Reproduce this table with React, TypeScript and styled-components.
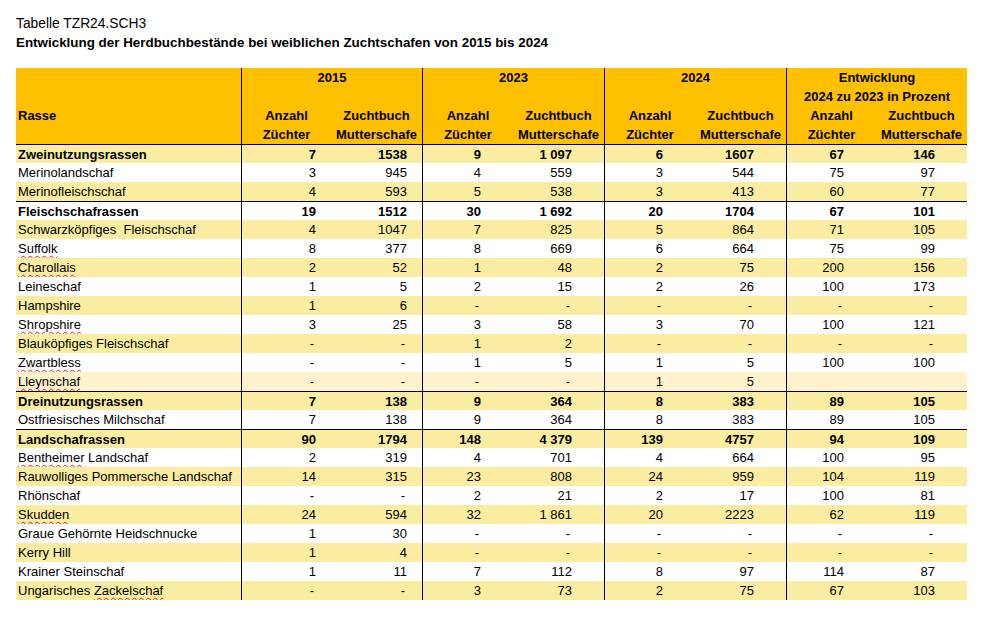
import styled, { createGlobalStyle, css } from "styled-components"

const GlobalStyle = createGlobalStyle`
  body {
    margin: 0;
    background: #ffffff;
    color: #000000;
    font-family: "Liberation Sans", Arial, sans-serif;
    font-size: 13px;
  }
`

const COLUMNS = "225px 90px 91px 91px 91px 91px 91px 90px 91px"

type Tone = "stripe" | "plain" | "cream"

interface IBreedRow {
  name: string
  misspelled?: string
  group?: boolean
  tone: Tone
  values: string[]
}

const rows: IBreedRow[] = [
  { name: "Zweinutzungsrassen", group: true, tone: "stripe", values: ["7", "1538", "9", "1 097", "6", "1607", "67", "146"] },
  { name: "Merinolandschaf", tone: "plain", values: ["3", "945", "4", "559", "3", "544", "75", "97"] },
  { name: "Merinofleischschaf", tone: "stripe", values: ["4", "593", "5", "538", "3", "413", "60", "77"] },
  { name: "Fleischschafrassen", group: true, tone: "plain", values: ["19", "1512", "30", "1 692", "20", "1704", "67", "101"] },
  { name: "Schwarzköpfiges  Fleischschaf", tone: "stripe", values: ["4", "1047", "7", "825", "5", "864", "71", "105"] },
  { name: "", misspelled: "Suffolk", tone: "plain", values: ["8", "377", "8", "669", "6", "664", "75", "99"] },
  { name: "", misspelled: "Charollais", tone: "stripe", values: ["2", "52", "1", "48", "2", "75", "200", "156"] },
  { name: "Leineschaf", tone: "plain", values: ["1", "5", "2", "15", "2", "26", "100", "173"] },
  { name: "Hampshire", tone: "stripe", values: ["1", "6", "-", "-", "-", "-", "-", "-"] },
  { name: "", misspelled: "Shropshire", tone: "plain", values: ["3", "25", "3", "58", "3", "70", "100", "121"] },
  { name: "Blauköpfiges Fleischschaf", tone: "stripe", values: ["-", "-", "1", "2", "-", "-", "-", "-"] },
  { name: "", misspelled: "Zwartbless", tone: "plain", values: ["-", "-", "1", "5", "1", "5", "100", "100"] },
  { name: "", misspelled: "Lleynschaf", tone: "cream", values: ["-", "-", "-", "-", "1", "5", "", ""] },
  { name: "Dreinutzungsrassen", group: true, tone: "stripe", values: ["7", "138", "9", "364", "8", "383", "89", "105"] },
  { name: "Ostfriesisches Milchschaf", tone: "plain", values: ["7", "138", "9", "364", "8", "383", "89", "105"] },
  { name: "Landschafrassen", group: true, tone: "stripe", values: ["90", "1794", "148", "4 379", "139", "4757", "94", "109"] },
  { name: " Landschaf", misspelled: "Bentheimer", tone: "plain", values: ["2", "319", "4", "701", "4", "664", "100", "95"] },
  { name: "Rauwolliges Pommersche Landschaf", tone: "stripe", values: ["14", "315", "23", "808", "24", "959", "104", "119"] },
  { name: "Rhönschaf", tone: "plain", values: ["-", "-", "2", "21", "2", "17", "100", "81"] },
  { name: "", misspelled: "Skudden", tone: "stripe", values: ["24", "594", "32", "1 861", "20", "2223", "62", "119"] },
  { name: "Graue Gehörnte Heidschnucke", tone: "plain", values: ["1", "30", "-", "-", "-", "-", "-", "-"] },
  { name: "Kerry Hill", tone: "stripe", values: ["1", "4", "-", "-", "-", "-", "-", "-"] },
  { name: "Krainer Steinschaf", tone: "plain", values: ["1", "11", "7", "112", "8", "97", "114", "87"] },
  { name: "Ungarisches ", misspelled: "Zackelschaf", tone: "stripe", values: ["-", "-", "3", "73", "2", "75", "67", "103"] },
]

const toneColors: Record<Tone, string> = {
  stripe: "#faeda1",
  plain: "#ffffff",
  cream: "#fff2cc",
}

const Page = styled.div`
  padding: 14px 16px 20px 16px;
`

const Caption = styled.div`
  line-height: 19px;
  font-size: 13.8px;
`

const Subtitle = styled.div`
  line-height: 19px;
  font-size: 13.4px;
  font-weight: bold;
`

const Sheet = styled.div`
  margin-top: 16px;
  width: 951px;
`

const HeaderGrid = styled.div`
  display: grid;
  grid-template-columns: ${COLUMNS};
  grid-template-rows: repeat(4, 19px);
  background: #ffc000;
  font-weight: bold;
  line-height: 19px;
`

const HeadCell = styled.div<{
  $col: string
  $row: string
  $divider?: boolean
  $left?: boolean
}>`
  grid-column: ${(p) => p.$col};
  grid-row: ${(p) => p.$row};
  box-sizing: border-box;
  text-align: ${(p) => (p.$left ? "left" : "center")};
  white-space: nowrap;
  ${(p) =>
    p.$divider &&
    css`
      border-left: 1px solid #000;
    `}
`

const RasseLabel = styled.div`
  padding: 38px 0 0 2px;
`

const Row = styled.div<{ $tone: Tone; $group?: boolean; $ruled?: boolean }>`
  display: grid;
  grid-template-columns: ${COLUMNS};
  height: 19px;
  box-sizing: border-box;
  background: ${(p) => toneColors[p.$tone]};
  font-weight: ${(p) => (p.$group ? "bold" : "normal")};
  ${(p) =>
    p.$ruled &&
    css`
      border-top: 1px solid #000;
    `}
`

const NameCell = styled.div`
  display: flex;
  align-items: center;
  padding-left: 2px;
  white-space: pre;
  overflow: hidden;
`

const Misspelled = styled.span`
  text-decoration-line: underline;
  text-decoration-style: wavy;
  text-decoration-color: #e31b1b;
  text-decoration-thickness: 1px;
  text-underline-offset: 2px;
`

const NumCell = styled.div<{ $divider?: boolean; $pad: number }>`
  display: flex;
  align-items: center;
  justify-content: flex-end;
  box-sizing: border-box;
  padding-right: ${(p) => p.$pad}px;
  ${(p) =>
    p.$divider &&
    css`
      border-left: 1px solid #000;
    `}
`

const Dash = styled.span`
  margin-right: 2px;
`

const years = ["2015", "2023", "2024"]

function Header() {
  return (
    <HeaderGrid>
      <HeadCell $col="1" $row="1 / 5" $left>
        <RasseLabel>Rasse</RasseLabel>
      </HeadCell>
      {years.map((year, i) => (
        <HeadCell key={year} $col={`${2 + i * 2} / span 2`} $row="1 / 3" $divider>
          {year}
        </HeadCell>
      ))}
      <HeadCell $col="8 / span 2" $row="1 / 3" $divider>
        Entwicklung
        <br />
        2024 zu 2023 in Prozent
      </HeadCell>
      {Array.from({ length: 8 }).map((_, i) => (
        <HeadCell key={i} $col={`${2 + i}`} $row="3 / 5" $divider={i % 2 === 0}>
          {i % 2 === 0 ? (
            <>
              Anzahl
              <br />
              Züchter
            </>
          ) : (
            <>
              Zuchtbuch
              <br />
              Mutterschafe
            </>
          )}
        </HeadCell>
      ))}
    </HeaderGrid>
  )
}

function BreedRow({ row, first }: { row: IBreedRow; first: boolean }) {
  const startsWithTypo = row.misspelled && !row.name.startsWith("Ungarisches")
  return (
    <Row $tone={row.tone} $group={row.group} $ruled={first || row.group}>
      <NameCell>
        {startsWithTypo && <Misspelled>{row.misspelled}</Misspelled>}
        {row.name}
        {row.misspelled && !startsWithTypo && <Misspelled>{row.misspelled}</Misspelled>}
      </NameCell>
      {row.values.map((v, i) => (
        <NumCell key={i} $divider={i % 2 === 0} $pad={i < 2 ? 15 : 32}>
          {v === "-" ? <Dash>-</Dash> : v}
        </NumCell>
      ))}
    </Row>
  )
}

export default function App() {
  return (
    <>
      <GlobalStyle />
      <Page>
        <Caption>Tabelle TZR24.SCH3</Caption>
        <Subtitle>
          Entwicklung der Herdbuchbestände bei weiblichen Zuchtschafen von 2015 bis 2024
        </Subtitle>
        <Sheet>
          <Header />
          {rows.map((row, i) => (
            <BreedRow key={i} row={row} first={i === 0} />
          ))}
        </Sheet>
      </Page>
    </>
  )
}
